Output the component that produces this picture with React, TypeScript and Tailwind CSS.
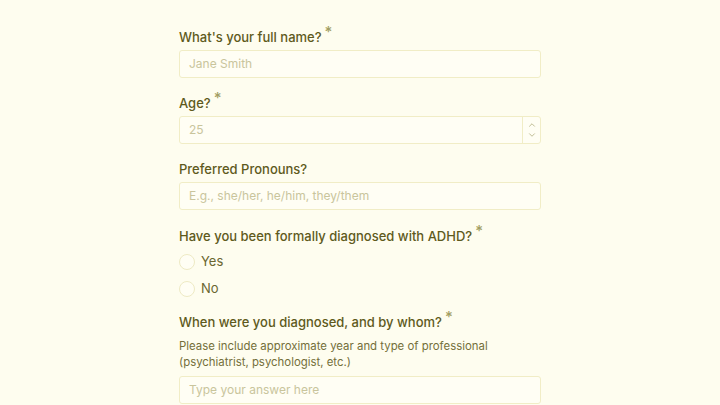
import { ChevronUp, ChevronDown } from "lucide-react";

const FONT = { fontFamily: '"Inter", "Noto Sans", sans-serif' };

function Label({ text, required }: { text: string; required?: boolean }) {
  return (
    <div className="h-[20px] flex items-start text-[13px] leading-[20px] font-medium text-[#5e5a1c]">
      <span>{text}</span>
      {required && (
        <span className="ml-[3px] -mt-[5px] text-[15px] text-[#a29e62]">*</span>
      )}
    </div>
  );
}

function TextInput({ placeholder }: { placeholder: string }) {
  return (
    <div className="mt-[3px] h-[28px] w-full rounded-[3px] border border-[#f1edc6] bg-[#fffef4] px-[9px] flex items-center text-[12px] text-[#c9c59c]">
      {placeholder}
    </div>
  );
}

function Radio({ label }: { label: string }) {
  return (
    <div className="flex items-center h-[27px] gap-[6px]">
      <span className="w-[16px] h-[16px] rounded-full border border-[#eeeac4] bg-[#fffef4]" />
      <span className="text-[13px] text-[#6a6630]">{label}</span>
    </div>
  );
}

export default function App() {
  return (
    <div className="w-[720px] h-[405px] overflow-hidden bg-[#fefdef]" style={FONT}>
      <div className="mx-auto w-[362px] pt-[27px] flex flex-col">
        <Label text="What's your full name?" required />
        <TextInput placeholder="Jane Smith" />

        <div className="mt-[15px]">
          <Label text="Age?" required />
          <div className="mt-[3px] h-[28px] w-full rounded-[3px] border border-[#f1edc6] bg-[#fffef4] flex items-center text-[12px] text-[#c9c59c]">
            <span className="flex-1 px-[9px]">25</span>
            <div className="h-full w-[18px] border-l border-[#f1edc6] flex flex-col items-center justify-center text-[#a9a572]">
              <ChevronUp size={10} strokeWidth={1.75} />
              <ChevronDown size={10} strokeWidth={1.75} />
            </div>
          </div>
        </div>

        <div className="mt-[15px]">
          <Label text="Preferred Pronouns?" />
          <TextInput placeholder="E.g., she/her, he/him, they/them" />
        </div>

        <div className="mt-[16px]">
          <Label text="Have you been formally diagnosed with ADHD?" required />
          <div className="mt-[2px] flex flex-col">
            <Radio label="Yes" />
            <Radio label="No" />
          </div>
        </div>

        <div className="mt-[10px]">
          <Label text="When were you diagnosed, and by whom?" required />
          <p className="mt-[6px] text-[11.4px] leading-[16px] text-[#746f3a]">
            Please include approximate year and type of professional
            <br />
            (psychiatrist, psychologist, etc.)
          </p>
          <div className="mt-[6px]">
            <TextInput placeholder="Type your answer here" />
          </div>
        </div>
      </div>
    </div>
  );
}
